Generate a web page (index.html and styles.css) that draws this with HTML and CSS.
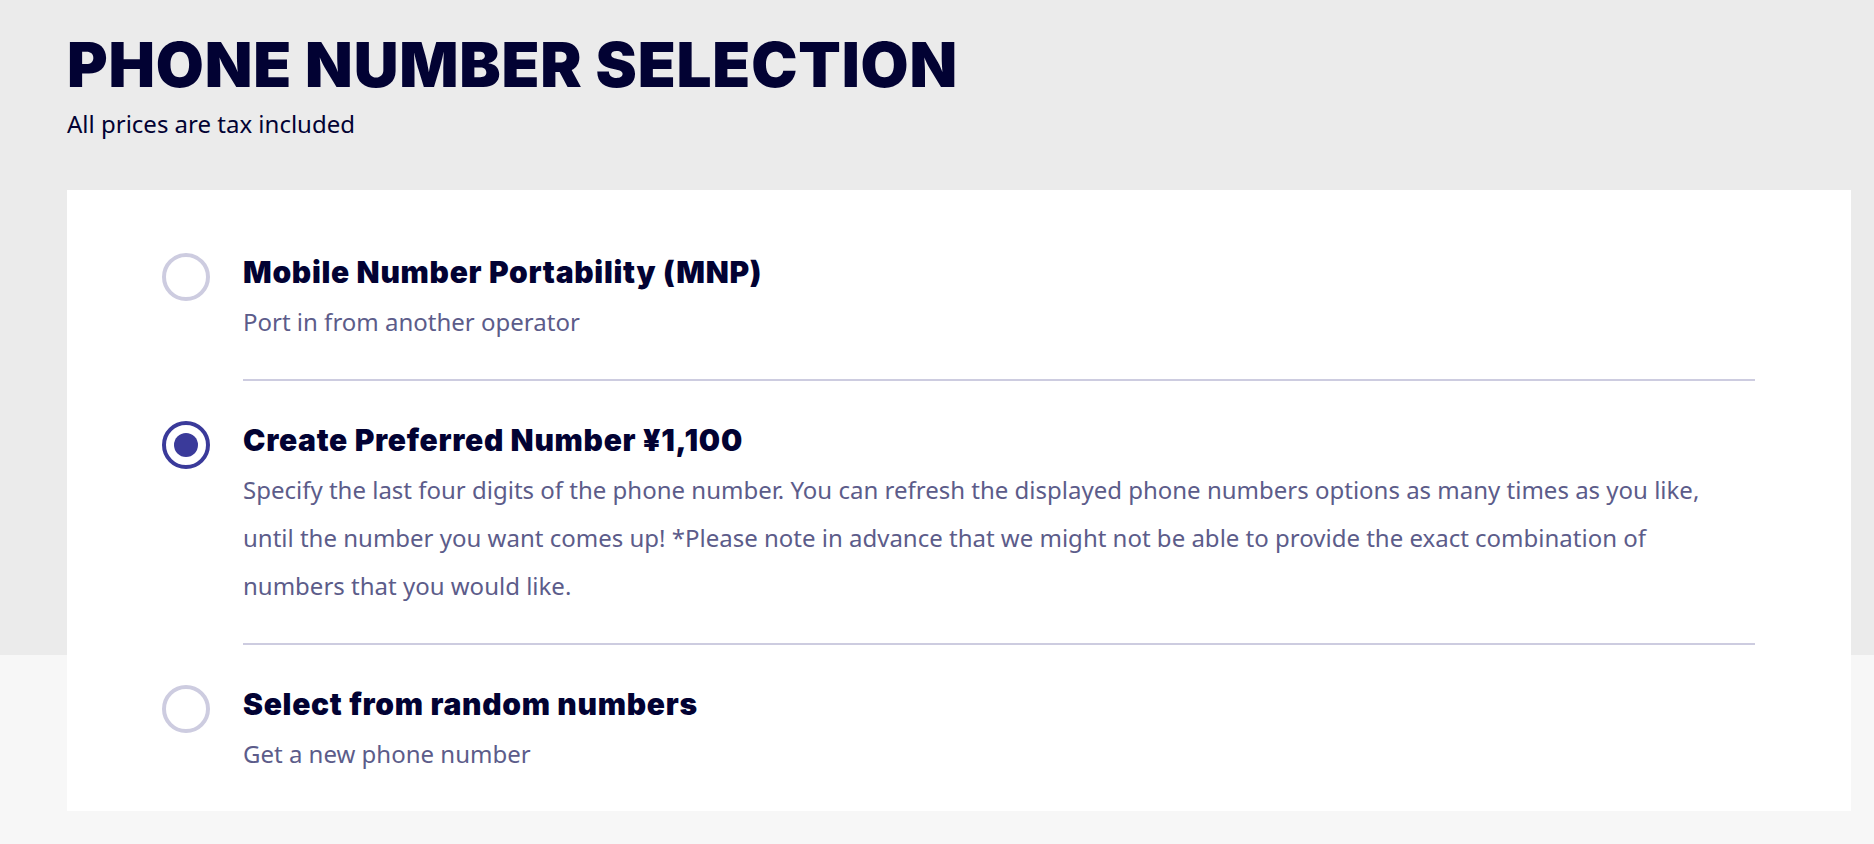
FILE: index.html
```html
<!DOCTYPE html>
<html lang="en">
<head>
<meta charset="utf-8">
<title>Phone Number Selection</title>
<link rel="stylesheet" href="styles.css">
</head>
<body>
<div class="page">
  <header class="hero">
    <h1 class="title">PHONE NUMBER SELECTION</h1>
    <p class="subtitle">All prices are tax included</p>
  </header>
  <section class="card">
    <div class="option">
      <span class="radio"></span>
      <div class="option-body">
        <h2 class="option-title">Mobile Number Portability (MNP)</h2>
        <p class="option-desc">Port in from another operator</p>
      </div>
    </div>
    <div class="option">
      <span class="radio radio-checked"></span>
      <div class="option-body">
        <h2 class="option-title">Create Preferred Number ¥1,100</h2>
        <p class="option-desc">Specify the last four digits of the phone number. You can refresh the displayed phone numbers options as many times as you like, until the number you want comes up! *Please note in advance that we might not be able to provide the exact combination of numbers that you would like.</p>
      </div>
    </div>
    <div class="option option-last">
      <span class="radio"></span>
      <div class="option-body">
        <h2 class="option-title">Select from random numbers</h2>
        <p class="option-desc">Get a new phone number</p>
      </div>
    </div>
  </section>
</div>
</body>
</html>
```
FILE: styles.css
```css
html, body {
  margin: 0;
  padding: 0;
}
body {
  background: linear-gradient(#ebebeb 0, #ebebeb 655px, #f7f7f7 655px);
  min-height: 844px;
  font-family: "Noto Sans", "Open Sans", sans-serif;
  color: #020233;
}
.page {
  padding: 0 23px 0 67px;
}
.hero {
  padding-top: 29px;
  padding-bottom: 50px;
}
.title {
  margin: 0;
  font-family: Inter, "Noto Sans", sans-serif;
  font-weight: 900;
  font-size: 62px;
  line-height: 72px;
  letter-spacing: 0.8px;
  color: #020233;
}
.subtitle {
  margin: 7px 0 0;
  font-size: 24px;
  line-height: 32px;
  color: #020233;
}
.card {
  background: #ffffff;
  padding: 23px 96px 0 95px;
}
.option {
  display: flex;
  align-items: flex-start;
  gap: 33px;
}
.radio {
  flex: none;
  box-sizing: border-box;
  width: 48px;
  height: 48px;
  border-radius: 50%;
  border: 4px solid #cdcce0;
  margin-top: 40px;
  display: flex;
  align-items: center;
  justify-content: center;
}
.radio-checked {
  border-color: #3a3a9a;
}
.radio-checked::after {
  content: "";
  width: 24px;
  height: 24px;
  border-radius: 50%;
  background: #3a3a9a;
}
.option-body {
  flex: 1;
  padding: 41px 0 33px;
  border-bottom: 2px solid #cdcce0;
}
.option-last .option-body {
  border-bottom: none;
}
.option-title {
  margin: 0;
  font-family: Inter, "Noto Sans", sans-serif;
  font-weight: 900;
  font-size: 30px;
  line-height: 36px;
  letter-spacing: 0.7px;
  color: #020233;
}
.option-desc {
  margin: 8px 0 0;
  max-width: 1500px;
  font-size: 24px;
  line-height: 48px;
  color: #5c5c8a;
}
```
